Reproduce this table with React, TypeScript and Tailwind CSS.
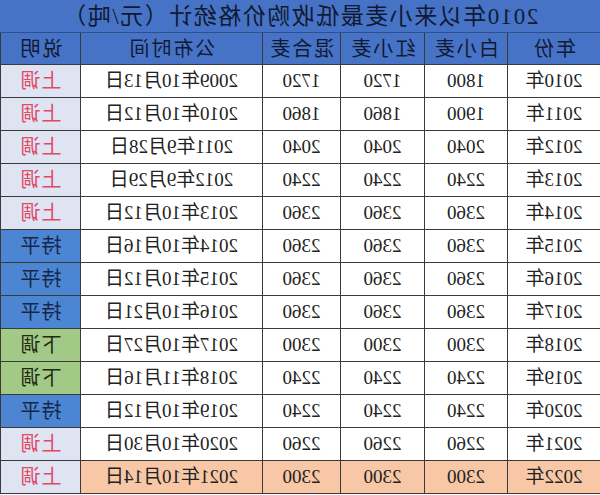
import React from "react";

type Row = { y: string; w: string; r: string; m: string; d: string; n: "up" | "flat" | "down" };

const rows: Row[] = [
  { y: "2010年", w: "1800", r: "1720", m: "1720", d: "2009年10月13日", n: "up" },
  { y: "2011年", w: "1900", r: "1860", m: "1860", d: "2010年10月12日", n: "up" },
  { y: "2012年", w: "2040", r: "2040", m: "2040", d: "2011年9月28日", n: "up" },
  { y: "2013年", w: "2240", r: "2240", m: "2240", d: "2012年9月29日", n: "up" },
  { y: "2014年", w: "2360", r: "2360", m: "2360", d: "2013年10月12日", n: "up" },
  { y: "2015年", w: "2360", r: "2360", m: "2360", d: "2014年10月16日", n: "flat" },
  { y: "2016年", w: "2360", r: "2360", m: "2360", d: "2015年10月12日", n: "flat" },
  { y: "2017年", w: "2360", r: "2360", m: "2360", d: "2016年10月21日", n: "flat" },
  { y: "2018年", w: "2300", r: "2300", m: "2300", d: "2017年10月27日", n: "down" },
  { y: "2019年", w: "2240", r: "2240", m: "2240", d: "2018年11月16日", n: "down" },
  { y: "2020年", w: "2240", r: "2240", m: "2240", d: "2019年10月12日", n: "flat" },
  { y: "2021年", w: "2260", r: "2260", m: "2260", d: "2020年10月30日", n: "up" },
  { y: "2022年", w: "2300", r: "2300", m: "2300", d: "2021年10月14日", n: "up" },
];

const cols = "grid grid-cols-[93px_83px_84px_78px_182px_80px]";
const cell = "flex items-center justify-center border-r border-b border-[#3a3a3a]";

export default function App() {
  return (
    <div
      className="w-[600px] h-[495px] bg-white overflow-hidden -scale-x-100 text-[#222]"
      style={{ fontFamily: '"Liberation Serif", "Noto Sans CJK SC", serif' }}
    >
      <div className="h-[33px] flex items-center justify-center pt-[2px] bg-[#4673c6] border-b border-[#2f4f8a] text-[23px] tracking-[1.5px] text-[#111a33]">
        2010年以来小麦最低收购价格统计（元/吨）
      </div>
      <div className={`${cols} h-[32px] bg-[#4673c6] text-[20px] text-[#111a33]`}>
        {["年份", "白小麦", "红小麦", "混合麦", "公布时间", "说明"].map((h) => (
          <div key={h} className={`${cell} border-[#2f4f8a] tracking-[2px]`}>{h}</div>
        ))}
      </div>
      {rows.map((r, i) => {
        const last = i === rows.length - 1;
        const bg = last ? "bg-[#f7c7a6]" : "bg-white";
        const note =
          r.n === "up"
            ? { t: "上调", c: "bg-[#dfe4f3] text-[#e04a66]" }
            : r.n === "flat"
            ? { t: "持平", c: "bg-[#4c86d2] text-[#15264a]" }
            : { t: "下调", c: "bg-[#a2c986] text-[#1f2a14]" };
        return (
          <div key={r.y} className={`${cols} h-[33px] text-[19px]`}>
            <div className={`${cell} ${bg}`}>{r.y}</div>
            <div className={`${cell} ${bg}`}>{r.w}</div>
            <div className={`${cell} ${bg}`}>{r.r}</div>
            <div className={`${cell} ${bg}`}>{r.m}</div>
            <div className={`${cell} ${bg}`}>{r.d}</div>
            <div className={`${cell} ${note.c} text-[20px] tracking-[1px]`}>{note.t}</div>
          </div>
        );
      })}
    </div>
  );
}
